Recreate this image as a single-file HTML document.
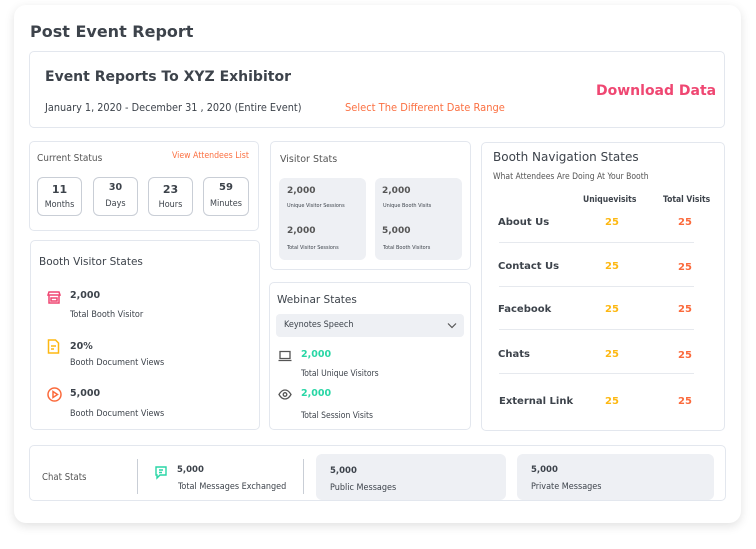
<!DOCTYPE html>
<html><head><meta charset="utf-8"><style>
*{margin:0;padding:0;box-sizing:border-box}
body{width:756px;height:549px;background:#fff;font-family:"DejaVu Sans","Liberation Sans",sans-serif;color:#3d434b;position:relative;overflow:hidden}
.a{position:absolute}
.card{position:absolute;border:1px solid #e3e7ee;border-radius:5px;background:#fff}
.c{font-family:"DejaVu Sans Condensed","DejaVu Sans",sans-serif}
.b{font-weight:bold}
.box{position:absolute;border:1px solid #c9ced6;border-radius:6px;text-align:center;width:45px;height:39px}
.gray{position:absolute;background:#eef0f4;border-radius:6px}
.div{position:absolute;height:1px;background:#e6e9ee;left:17px;width:195px}
</style></head><body>
<div class="a" style="left:14px;top:5px;width:727px;height:518px;border-radius:12px;background:#fff;box-shadow:0 3px 10px rgba(0,0,0,.12)"></div>
<div class="a b" style="left:30px;top:22px;font-size:16px;color:#3d434b">Post Event Report</div>

<div class="card" style="left:29px;top:51px;width:696px;height:77px"></div>
<div class="a b" style="left:45px;top:69px;font-size:14px">Event Reports To XYZ Exhibitor</div>
<div class="a c" style="left:45px;top:101px;font-size:10.8px">January 1, 2020 - December 31 , 2020 (Entire Event)</div>
<div class="a c" style="left:345px;top:101px;font-size:11px;color:#fb7042">Select The Different Date Range</div>
<div class="a b" style="left:596px;top:83px;font-size:14px;color:#ef4772">Download Data</div>

<div class="card" style="left:29px;top:141px;width:230px;height:90px"></div>
<div class="a c" style="left:37px;top:153px;font-size:10px;color:#555">Current Status</div>
<div class="a c" style="left:172px;top:151px;font-size:8.7px;color:#fb7042">View Attendees List</div>
<div class="box" style="left:37px;top:177px"><div class="b" style="font-size:11px;margin-top:5px">11</div><div class="c" style="font-size:9px;margin-top:4px">Months</div></div>
<div class="box" style="left:93px;top:177px"><div class="b" style="font-size:9.5px;margin-top:4px">30</div><div class="c" style="font-size:9px;margin-top:6px">Days</div></div>
<div class="box" style="left:148px;top:177px"><div class="b" style="font-size:11px;margin-top:5px">23</div><div class="c" style="font-size:9px;margin-top:4px">Hours</div></div>
<div class="box" style="left:203px;top:177px;width:46px"><div class="b" style="font-size:10px;margin-top:4px">59</div><div class="c" style="font-size:9px;margin-top:6px">Minutes</div></div>

<div class="card" style="left:30px;top:240px;width:230px;height:190px"></div>
<div class="a" style="left:39px;top:256px;font-size:10.5px">Booth Visitor States</div>
<svg class="a" style="left:47px;top:290px" width="14" height="14" viewBox="0 0 14 14" fill="none" stroke="#ef4772" stroke-width="1.5"><path d="M2 2h10l1 3H1z M2 5v8h10V5"/><path d="M4 8h6v3H4z"/></svg>
<div class="a b" style="left:70px;top:290px;font-size:9.5px">2,000</div>
<div class="a c" style="left:70px;top:310px;font-size:9px">Total Booth Visitor</div>
<svg class="a" style="left:47px;top:339px" width="13" height="15" viewBox="0 0 13 15" fill="none" stroke="#fdb813" stroke-width="1.5"><path d="M1.5 1h7l3 3v10h-10z"/><path d="M4 7h5M4 10h3"/></svg>
<div class="a b" style="left:70px;top:341px;font-size:9.5px">20%</div>
<div class="a c" style="left:70px;top:358px;font-size:9px">Booth Document Views</div>
<svg class="a" style="left:47px;top:387px" width="15" height="15" viewBox="0 0 15 15" fill="none" stroke="#fb6a3c" stroke-width="1.5"><circle cx="7.5" cy="7.5" r="6.5"/><path d="M6 4.5v6l4.5-3z"/></svg>
<div class="a b" style="left:70px;top:388px;font-size:9.5px">5,000</div>
<div class="a c" style="left:70px;top:409px;font-size:9px">Booth Document Views</div>

<div class="card" style="left:270px;top:141px;width:201px;height:129px"></div>
<div class="a" style="left:280px;top:154px;font-size:9.5px;color:#555">Visitor Stats</div>
<div class="gray" style="left:279px;top:178px;width:87px;height:82px"></div>
<div class="gray" style="left:375px;top:178px;width:87px;height:82px"></div>
<div class="a b" style="left:287px;top:186px;font-size:9px;color:#555">2,000</div>
<div class="a c" style="left:287px;top:203px;font-size:5.5px">Unique Visitor Sessions</div>
<div class="a b" style="left:287px;top:226px;font-size:9px;color:#555">2,000</div>
<div class="a c" style="left:287px;top:245px;font-size:5.5px">Total Visitor Sessions</div>
<div class="a b" style="left:382px;top:186px;font-size:9px;color:#555">2,000</div>
<div class="a c" style="left:383px;top:203px;font-size:5.5px">Unique Booth Visits</div>
<div class="a b" style="left:382px;top:226px;font-size:9px;color:#555">5,000</div>
<div class="a c" style="left:383px;top:245px;font-size:5.5px">Total Booth Visitors</div>

<div class="card" style="left:269px;top:282px;width:202px;height:148px"></div>
<div class="a" style="left:277px;top:294px;font-size:10.5px">Webinar States</div>
<div class="a" style="left:276px;top:314px;width:188px;height:23px;background:#eef0f4;border-radius:4px"></div>
<div class="a c" style="left:284px;top:320px;font-size:9px">Keynotes Speech</div>
<svg class="a" style="left:447px;top:322px" width="10" height="7" viewBox="0 0 10 7" fill="none" stroke="#555" stroke-width="1.2"><path d="M1 1.5l4 4 4-4"/></svg>
<svg class="a" style="left:278px;top:350px" width="14" height="12" viewBox="0 0 14 12" fill="none" stroke="#555" stroke-width="1.3"><path d="M2 1.5h10v7H2z M0.5 10.5h13"/></svg>
<div class="a b" style="left:301px;top:349px;font-size:9.5px;color:#28d6a5">2,000</div>
<div class="a c" style="left:301px;top:369px;font-size:8.5px">Total Unique Visitors</div>
<svg class="a" style="left:278px;top:389px" width="14" height="11" viewBox="0 0 14 11" fill="none" stroke="#555" stroke-width="1.3"><path d="M1 5.5C3 2 5 1 7 1s4 1 6 4.5C11 9 9 10 7 10S3 9 1 5.5z"/><circle cx="7" cy="5.5" r="1.8"/></svg>
<div class="a b" style="left:301px;top:388px;font-size:9.5px;color:#28d6a5">2,000</div>
<div class="a c" style="left:301px;top:411px;font-size:8.5px">Total Session Visits</div>

<div class="card" style="left:481px;top:142px;width:244px;height:289px">
<div class="a" style="left:11px;top:7px;font-size:12px">Booth Navigation States</div>
<div class="a c" style="left:11px;top:29px;font-size:8.5px;color:#555">What Attendees Are Doing At Your Booth</div>
<div class="a b c" style="left:101px;top:52px;font-size:8.5px">Uniquevisits</div>
<div class="a b c" style="left:181px;top:52px;font-size:8.5px">Total Visits</div>
<div class="a b" style="left:16px;top:74px;font-size:10px">About Us</div>
<div class="a b" style="left:16px;top:118px;font-size:10px">Contact Us</div>
<div class="a b" style="left:16px;top:161px;font-size:10px">Facebook</div>
<div class="a b" style="left:16px;top:206px;font-size:10px">Chats</div>
<div class="a b" style="left:17px;top:253px;font-size:10px">External Link</div>
<div class="a b" style="left:123px;top:74px;font-size:10px;color:#fdb813">25</div>
<div class="a b" style="left:123px;top:118px;font-size:10px;color:#fdb813">25</div>
<div class="a b" style="left:123px;top:161px;font-size:10px;color:#fdb813">25</div>
<div class="a b" style="left:123px;top:206px;font-size:10px;color:#fdb813">25</div>
<div class="a b" style="left:123px;top:253px;font-size:10px;color:#fdb813">25</div>
<div class="a b" style="left:196px;top:74px;font-size:10px;color:#fb6a3c">25</div>
<div class="a b" style="left:196px;top:119px;font-size:10px;color:#fb6a3c">25</div>
<div class="a b" style="left:196px;top:161px;font-size:10px;color:#fb6a3c">25</div>
<div class="a b" style="left:196px;top:207px;font-size:10px;color:#fb6a3c">25</div>
<div class="a b" style="left:196px;top:253px;font-size:10px;color:#fb6a3c">25</div>
<div class="div" style="top:99px"></div>
<div class="div" style="top:143px"></div>
<div class="div" style="top:186px"></div>
<div class="div" style="top:230px"></div>
</div>

<div class="card" style="left:29px;top:445px;width:697px;height:56px"></div>
<div class="a c" style="left:42px;top:472px;font-size:9.5px;color:#555">Chat Stats</div>
<div class="a" style="left:137px;top:459px;width:1px;height:35px;background:#c9ced6"></div>
<div class="a" style="left:303px;top:459px;width:1px;height:35px;background:#c9ced6"></div>
<svg class="a" style="left:155px;top:466px" width="12" height="14" viewBox="0 0 12 14" fill="none" stroke="#28d6a5" stroke-width="1.4"><path d="M1 1h10v8H5l-3 3V9H1z"/><path d="M4 4h4M4 6.5h3"/></svg>
<div class="a b" style="left:177px;top:465px;font-size:8.5px">5,000</div>
<div class="a c" style="left:178px;top:482px;font-size:9px">Total Messages Exchanged</div>
<div class="gray" style="left:316px;top:454px;width:190px;height:46px"></div>
<div class="gray" style="left:517px;top:454px;width:197px;height:46px"></div>
<div class="a b" style="left:330px;top:466px;font-size:8.5px">5,000</div>
<div class="a c" style="left:330px;top:483px;font-size:9px">Public Messages</div>
<div class="a b" style="left:531px;top:465px;font-size:8.5px">5,000</div>
<div class="a c" style="left:531px;top:482px;font-size:9px">Private Messages</div>
</body></html>
